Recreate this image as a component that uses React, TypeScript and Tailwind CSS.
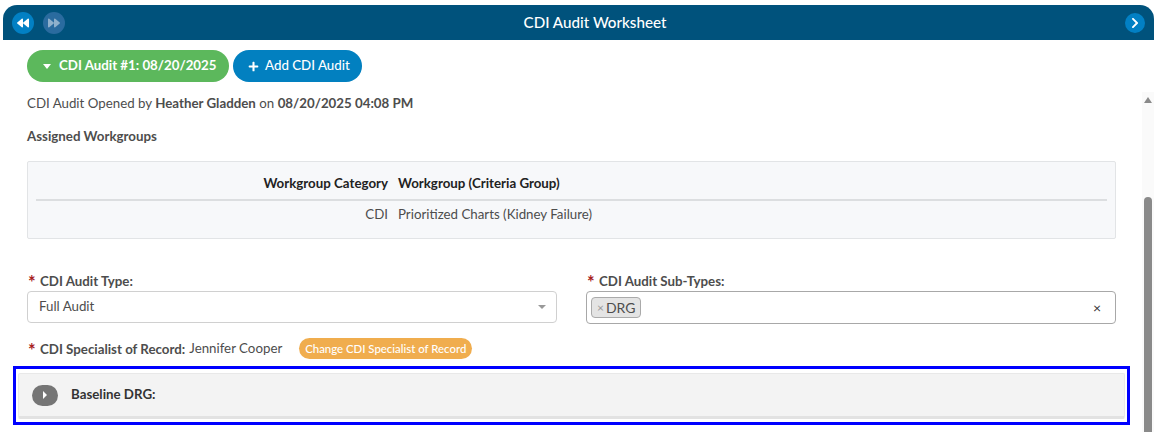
import { FaBackward, FaForward, FaChevronRight, FaPlus } from 'react-icons/fa';

function Req() {
  return <span className="inline-block w-[12px] text-[#a61c1c] font-bold text-[18px] leading-none relative top-[3px] h-[10px]">*</span>;
}

/** CDI audit worksheet panel */
export default function App() {
  return (
    <div className="w-[1161px] h-[432px] overflow-hidden bg-white pt-[5px] px-[3px] text-[13.3px] text-[#4d4d4d] font-['Lato','Open_Sans',sans-serif]">
      {/* Title bar */}
      <div className="w-[1151px] h-[35px] bg-[#00527c] rounded-t-[14px] flex items-center px-[9px]">
        <button className="w-[22px] h-[22px] rounded-full bg-[#0280c4] flex items-center justify-center text-white">
          <FaBackward size={12} />
        </button>
        <button className="w-[22px] h-[22px] ml-[9px] rounded-full bg-[#2a6b9f] flex items-center justify-center text-[#8fb0cc]">
          <FaForward size={12} />
        </button>
        <div className="flex-1 text-center text-white text-[15.2px] font-medium">CDI Audit Worksheet</div>
        <button className="w-[20px] h-[20px] rounded-full bg-[#0280c4] flex items-center justify-center text-white">
          <FaChevronRight size={12} />
        </button>
      </div>

      <div className="flex w-[1151px]">
        <div className="w-[1139px] shrink-0 pl-[24px] pr-[26px]">
          {/* Audit buttons */}
          <div className="flex gap-[4px] mt-[10px]">
            <button className="w-[202px] h-[32px] rounded-full bg-[#5cb85c] text-white font-bold flex items-center pl-[16px]">
              <span className="w-0 h-0 border-x-[4px] border-x-transparent border-t-[5px] border-t-white mr-[8px]" />
              CDI Audit #1: 08/20/2025
            </button>
            <button className="w-[129px] h-[32px] rounded-full bg-[#0280c0] text-white font-medium flex items-center pl-[15px]">
              <FaPlus size={11} className="mr-[6px]" />
              Add CDI Audit
            </button>
          </div>

          <div className="mt-[11px] h-[20px] leading-[20px]">
            CDI Audit Opened by <span className="font-bold">Heather Gladden</span> on <span className="font-bold">08/20/2025 04:08 PM</span>
          </div>
          <div className="mt-[13px] h-[20px] leading-[20px] font-bold">Assigned Workgroups</div>

          {/* Workgroups table */}
          <div className="mt-[15px] h-[78px] bg-[#f7f8fa] border border-[#e2e4e6] rounded-[2px] px-[8px]">
            <div className="flex h-[39px] items-center border-b-2 border-[#dcdee0] text-[#222222] font-bold pt-[7px]">
              <div className="w-[352px] text-right">Workgroup Category</div>
              <div className="ml-[10px]">Workgroup (Criteria Group)</div>
            </div>
            <div className="flex h-[28px] items-center">
              <div className="w-[352px] text-right">CDI</div>
              <div className="ml-[10px]">Prioritized Charts (Kidney Failure)</div>
            </div>
          </div>

          {/* Type and sub-types */}
          <div className="flex justify-between mt-[31px]">
            <div className="w-[530px]">
              <div className="h-[21px] leading-[20px] font-bold pl-[1px]"><Req />CDI Audit Type:</div>
              <div className="h-[32px] border border-[#d0d0d0] rounded-[4px] flex items-center justify-between pl-[11px] pr-[10px]">
                <span>Full Audit</span>
                <span className="w-0 h-0 border-x-[4px] border-x-transparent border-t-[4px] border-t-[#999999]" />
              </div>
            </div>
            <div className="w-[530px]">
              <div className="h-[21px] leading-[20px] font-bold pl-[1px]"><Req />CDI Audit Sub-Types:</div>
              <div className="h-[33px] border border-[#a8a8a8] rounded-[4px] flex items-center justify-between pl-[4px] pr-[14px]">
                <span className="h-[21px] w-[50px] bg-[#e4e4e4] border border-[#aaaaaa] rounded-[4px] flex items-center pl-[5px] text-[14px] leading-none">
                  <span className="text-[#999999] text-[12px] mr-[2px]">×</span>DRG
                </span>
                <span className="text-[#333333] text-[14px] leading-none">×</span>
              </div>
            </div>
          </div>

          {/* Specialist */}
          <div className="flex items-center mt-[14px] h-[21px] pl-[1px]">
            <span className="font-bold"><Req />CDI Specialist of Record:</span>
            <span className="ml-[4px]">Jennifer Cooper</span>
            <span className="ml-[17px] h-[21px] w-[173px] rounded-full bg-[#f0ad4e] text-white text-[11.4px] font-medium flex items-center justify-center">
              Change CDI Specialist of Record
            </span>
          </div>

          {/* Highlighted section */}
          <div className="mt-[7px] ml-[-14px] mr-[-14px] h-[59px] border-[3px] border-[#0000ff] px-[2px] pt-[4px]">
            <div className="h-[46px] bg-[#f3f3f3] border border-[#e8e8e8] border-b-[3px] border-b-[#e2e2e2] rounded-[2px] flex items-center pl-[13px]">
              <span className="w-[26px] h-[21px] rounded-full bg-[#757575] flex items-center justify-center">
                <span className="w-0 h-0 border-y-[4px] border-y-transparent border-l-[4px] border-l-white" />
              </span>
              <span className="ml-[13px] font-bold text-[#333333]">Baseline DRG:</span>
            </div>
          </div>
        </div>

        {/* Scrollbar */}
        <div className="w-[12px] mt-[52px] h-[340px] bg-[#fafafa] flex flex-col items-center">
          <span className="mt-[5px] w-0 h-0 border-x-[4px] border-x-transparent border-b-[6px] border-b-[#8a8a8a]" />
          <span className="mt-[94px] w-[8px] flex-1 rounded-t-full bg-[#8a8a8a]" />
        </div>
      </div>
    </div>
  );
}
